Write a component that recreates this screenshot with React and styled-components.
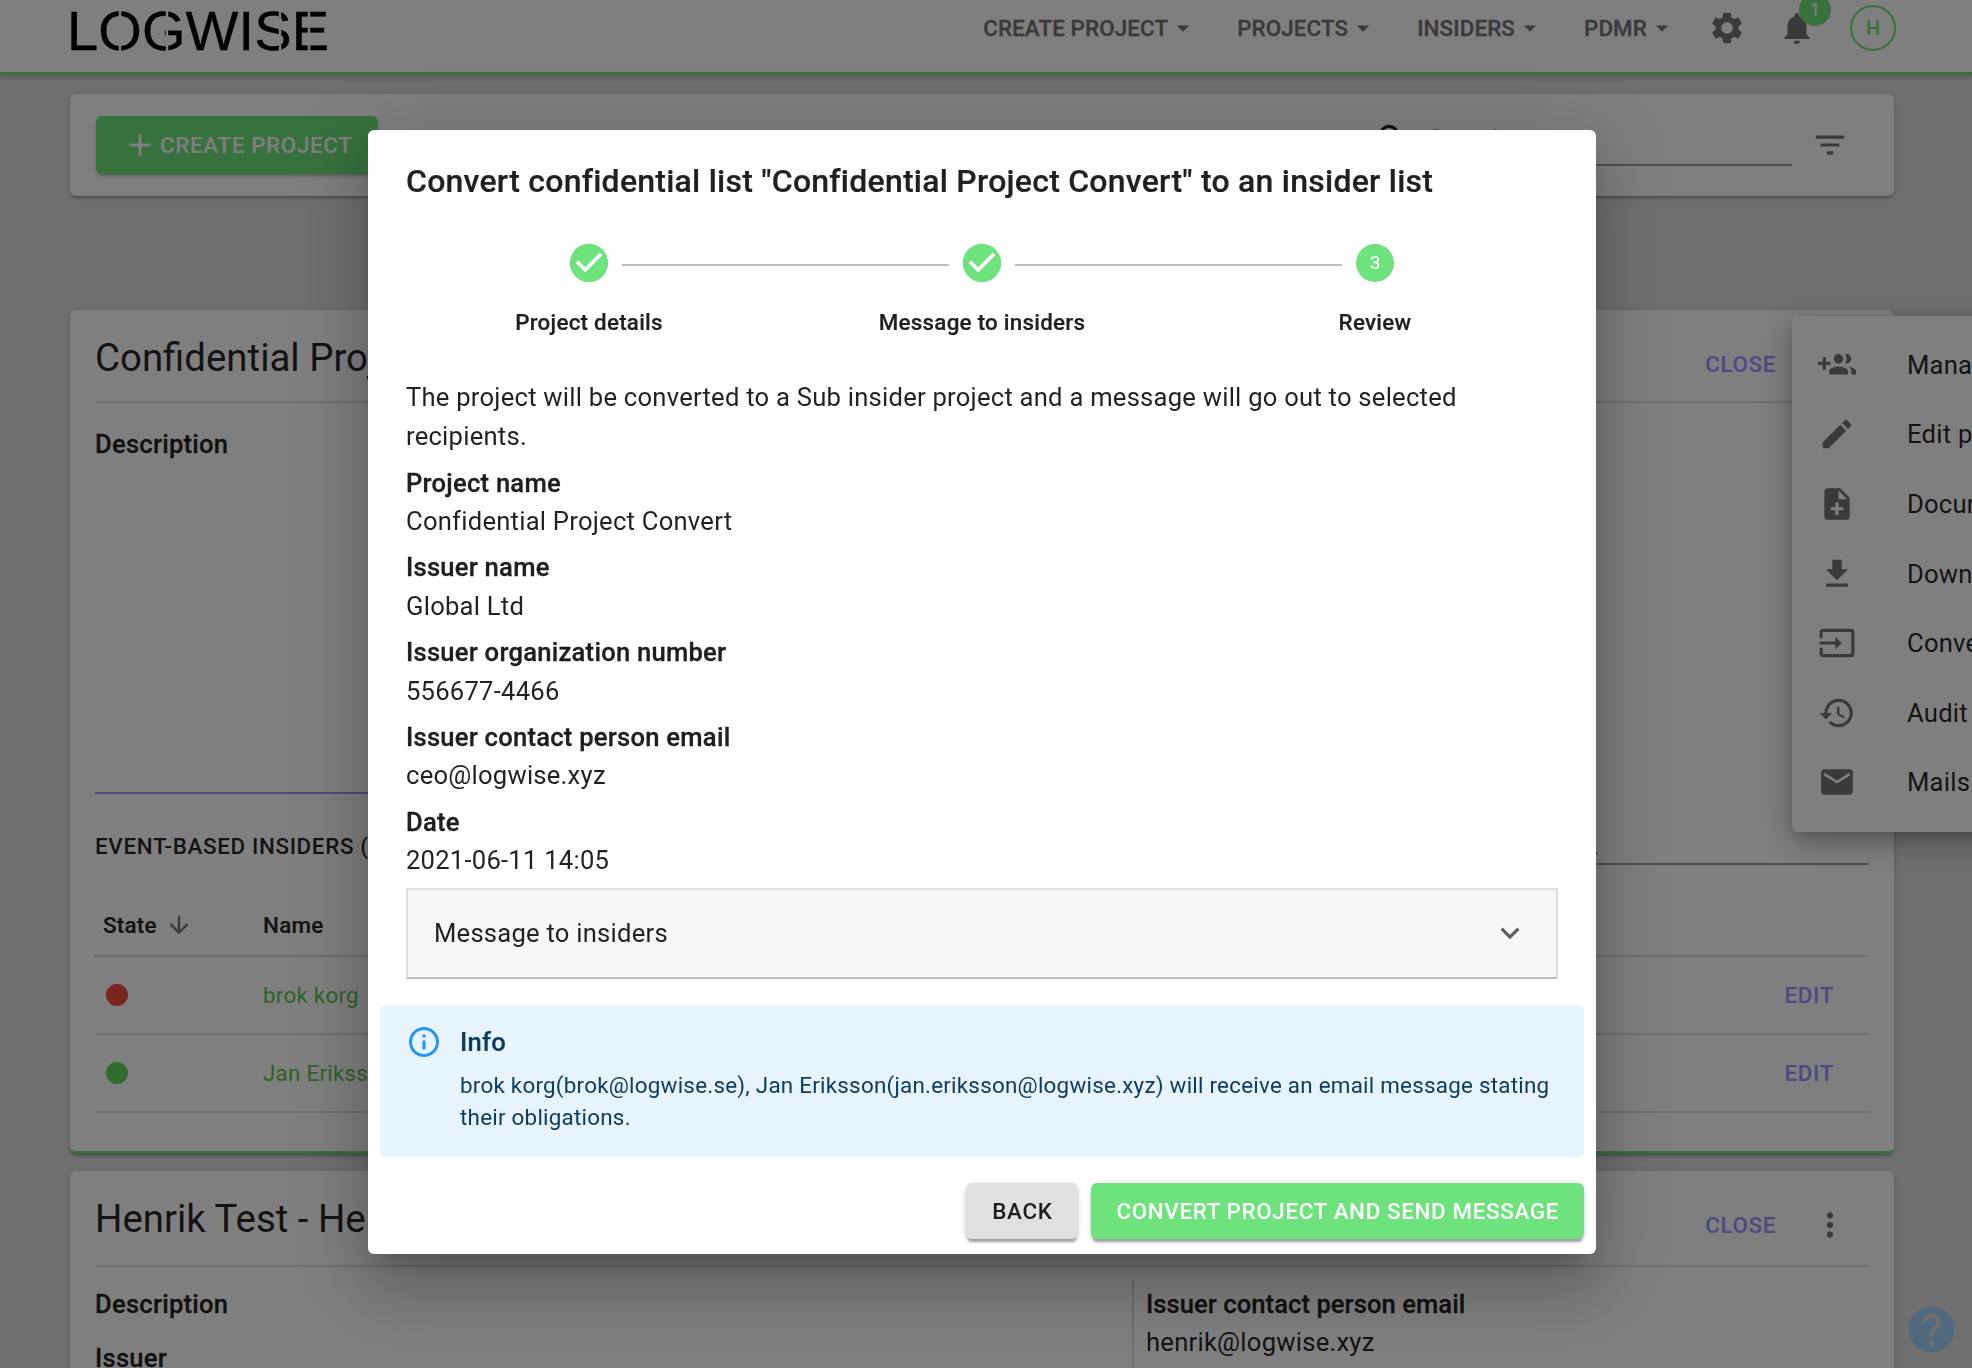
import React from "react";
import styled, { createGlobalStyle } from "styled-components";
import {
  MdSettings, MdNotifications, MdArrowDropDown, MdAdd, MdSearch, MdFilterList, MdMoreVert,
  MdEdit, MdNoteAdd, MdGetApp, MdInput, MdHistory, MdMail, MdHelp, MdArrowDownward,
  MdExpandMore, MdCheckCircle, MdOutlineInfo,
} from "react-icons/md";

const Global = createGlobalStyle`
  html, body { margin: 0; height: 100%; overflow: hidden; background: #e0e0e0; }
  body { font-family: Roboto, "Liberation Sans", sans-serif; color: rgba(0,0,0,.87); }
  * { box-sizing: border-box; }
  #root { height: 100%; }
`;

const Header = styled.header`
  display: flex; align-items: center; height: 75px; padding: 0 76px 17px 67px;
  background: #fff; border-bottom: 3px solid #6ee27c; box-shadow: 0 3px 5px rgba(0,0,0,.2);
`;
const LogoMark = styled.svg`width: 264px; height: 56px; margin-top: 8px; flex: none; display: block;`;
const Nav = styled.nav`display: flex; align-items: center; gap: 39px; margin-left: auto;`;
const NavItem = styled.div`
  display: flex; align-items: center; font-size: 22.4px; font-weight: 500; letter-spacing: .1px;
  -webkit-text-stroke: .3px #757575;
  color: #757575; white-space: nowrap; svg { font-size: 30px; }
`;
const HeaderIcon = styled.div`
  position: relative; display: flex; margin-left: ${p => p.$gap}px; color: #757575; font-size: 38px;
`;
const Badge = styled.span`
  position: absolute; left: 21px; top: -15px; width: 32px; height: 32px; border-radius: 50%;
  background: #6ee27c; color: #fff; font-size: 19px; display: flex; align-items: center; justify-content: center;
`;
const Avatar = styled.div`
  width: 46px; height: 46px; margin-left: 34px; border-radius: 50%; border: 2px solid #6ee27c; color: #6ee27c;
  font-size: 20px; font-weight: 500; display: flex; align-items: center; justify-content: center;
`;

const Main = styled.main`padding: 19px 78px 0 70px;`;
const Card = styled.section`
  background: #fff; border-radius: 6px; padding: 0 25px;
  margin-top: ${p => p.$top || 0}px;
  border-bottom: ${p => (p.$accent ? "3px solid #6ee27c" : "0")};
  box-shadow: 0 3px 2px -2px rgba(0,0,0,.2), 0 2px 3px rgba(0,0,0,.14), 0 2px 8px rgba(0,0,0,.12);
`;
const Toolbar = styled(Card)`display: flex; align-items: flex-start; height: 102px; padding: 22px 26px;`;
const CreateButton = styled.button`
  display: flex; align-items: center; height: 58px; width: 282px; padding: 0 0 0 26px; border: 0; border-radius: 6px;
  background: #6ee27c; color: #fff; font: 500 22.4px Roboto, sans-serif; letter-spacing: .02857em;
  box-shadow: 0 3px 3px -2px rgba(0,0,0,.2), 0 3px 4px rgba(0,0,0,.14);
  svg { font-size: 36px; margin-right: 2px; }
`;
const SearchField = styled.div`
  display: flex; align-items: center; height: 50px; width: 422px; margin-left: auto; padding: 0 0 2px 4px;
  border-bottom: 2px solid #9e9e9e; color: #9e9e9e; font-size: 25.6px; gap: 16px;
  svg { color: #222; font-size: 38px; flex: none; }
`;
const ToolIcon = styled.div`display: flex; margin: 10px 19px 0 19px; color: #757575; font-size: 38px;`;

const CardHead = styled.div`
  display: flex; align-items: center; height: ${p => p.$h}px; padding: 0 93px 0 0; border-bottom: 2px solid #dcdcdc; position: relative;
`;
const CardTitle = styled.h2`margin: ${p => p.$drop}px 0 0; flex: 1; font-size: 38.4px; font-weight: 400; white-space: nowrap;`;
const TextLink = styled.span`
  color: #9696ff; font-size: 22.4px; font-weight: 500; letter-spacing: .02857em;
`;
const HeadClose = styled(TextLink)`align-self: flex-start; margin-top: 41px; line-height: 26px;`;
const More = styled.div`position: absolute; right: 20px; top: 35px; display: flex; color: #757575; font-size: 38px;`;
const Label = styled.div`
  font-size: 25.6px; font-weight: 500; line-height: 38.4px; letter-spacing: .00938em; -webkit-text-stroke: .3px currentColor;
`;
const Value = styled.div`font-size: 25.6px; line-height: 38.4px; letter-spacing: .00938em;`;
const DescBlock = styled.div`height: 391px; padding-top: 22px; display: flex; flex-direction: column; justify-content: space-between;`;
const PurpleRule = styled.div`width: 1037px; height: 2px; background: #9696ff;`;
const InsidersBar = styled.div`display: flex; height: 71px;`;
const SectionTitle = styled.div`
  padding-top: 36px; font-size: 22.4px; line-height: 32px; font-weight: 500; letter-spacing: .02857em; white-space: nowrap;
`;
const InsiderSearch = styled.div`
  margin-left: auto; width: 468px; height: 71px; padding: 37px 0 0 100px; font-size: 25.6px; line-height: 30px;
  color: #8a8a8a; border-bottom: 2px solid #9e9e9e;
`;
const Row = styled.div`
  display: grid; grid-template-columns: 160px 1fr auto; align-items: center; height: ${p => p.$h}px; margin-top: ${p => p.$top || 0}px;
  padding: 0 35px 0 8px; border-bottom: 2px solid #dcdcdc; font-size: 22.4px; letter-spacing: .01071em;
`;
const HeadCell = styled.div`display: flex; align-items: center; gap: 8px; font-weight: 500; -webkit-text-stroke: .2px currentColor; svg { color: #757575; font-size: 28px; }`;
const StateDot = styled.span`display: block; width: 22px; height: 22px; margin-left: 3px; border-radius: 50%; background: ${p => p.$c};`;
const NameLink = styled.span`color: #5cc44a;`;
const RowEnd = styled.div`height: 38px;`;
const Columns = styled.div`display: grid; grid-template-columns: 1037px 1fr; padding-top: 13px; height: 200px;`;
const LeftCol = styled.div`padding-top: 5px;`;
const RightCol = styled.div`border-left: 2px solid #dcdcdc; padding: 5px 0 0 12px;`;
const SpacedLabel = styled(Label)`margin-top: ${p => p.$top || 0}px;`;
const NarrowLabel = styled(Label)`letter-spacing: .05px;`;

const Menu = styled.div`
  position: absolute; left: 1792px; top: 316px; width: 300px; height: 516px; padding: 14px 0; background: #fff; border-radius: 6px;
  box-shadow: 0 8px 16px -5px rgba(0,0,0,.2), 0 13px 30px 2px rgba(0,0,0,.14), 0 5px 36px 4px rgba(0,0,0,.12);
`;
const MenuItem = styled.div`
  display: flex; align-items: center; height: 69.6px; padding-left: 25px; font-size: 25.6px; letter-spacing: .00938em; white-space: nowrap;
  svg { width: 40px; font-size: 38px; color: #757575; margin-right: 50px; flex: none; }
`;
const Help = styled.div`position: fixed; right: 13px; bottom: 11px; display: flex; font-size: 55px; color: #a2d3ff;`;

const Backdrop = styled.div`position: fixed; inset: 0; background: rgba(0,0,0,.5);`;
const Modal = styled.div`
  position: fixed; left: 368px; top: 130px; width: 1228px; height: 1124px; background: #fff; border-radius: 6px;
  box-shadow: 0 17px 24px -11px rgba(0,0,0,.2), 0 38px 60px 5px rgba(0,0,0,.14), 0 14px 73px 13px rgba(0,0,0,.12);
  display: flex; flex-direction: column;
`;
const ModalTitle = styled.h2`
  margin: 0; padding: 26px 38px 0; font-size: 32px; line-height: 51.2px; font-weight: 500; letter-spacing: .0075em; white-space: nowrap;
  -webkit-text-stroke: .2px currentColor;
`;
const ModalBody = styled.div`padding: 36.5px 38px 0;`;
const StepIcons = styled.div`display: flex; align-items: center; gap: 14px; padding: 0 164px; height: 38px;`;
const StepCircle = styled.div`
  flex: none; width: 38px; height: 38px; border-radius: 50%; background: #6ee27c; color: #fff;
  font-size: 19px; display: flex; align-items: center; justify-content: center;
`;
const StepCheck = styled.div`
  flex: none; display: flex; width: 38px; height: 38px; align-items: center; justify-content: center; color: #6ee27c;
  svg { font-size: 46px; flex: none; }
`;
const Connector = styled.div`flex: 1; height: 2px; margin-top: 4px; background: #bdbdbd;`;
const StepLabels = styled.div`display: grid; grid-template-columns: 366px 420px 366px; margin-top: 24px;`;
const StepLabel = styled.div`
  text-align: center; font-size: 22.4px; line-height: 32px; font-weight: 500; letter-spacing: .01071em; -webkit-text-stroke: .2px currentColor;
`;
const Intro = styled.p`margin: 40.5px 0 8.5px; font-size: 25.6px; line-height: 38.4px; letter-spacing: .00938em;`;
const Field = styled.div`margin-bottom: 8px;`;
const Accordion = styled.div`
  display: flex; align-items: center; justify-content: space-between; height: 91px; padding: 0 27px 0 26px;
  background: #f7f7f7; border: 2px solid #e0e0e0; border-bottom-color: #bdbdbd; font-size: 25.6px; letter-spacing: .00938em;
  svg { color: #616161; font-size: 38px; }
`;
const Info = styled.div`
  display: flex; height: 152px; margin: 26px 12px 0; padding: 18.5px 25px 0 29px; border-radius: 6px; background: #e8f4fd; color: #0d3c61;
`;
const InfoIcon = styled.div`display: flex; color: #2196f3; font-size: 36px; width: 54px; height: 38px; align-items: center; margin-left: -3px; flex: none;`;
const InfoHead = styled.div`
  font-size: 25.6px; line-height: 38.4px; font-weight: 500; letter-spacing: .00938em; margin-bottom: 8px; -webkit-text-stroke: .2px currentColor;
`;
const InfoText = styled.div`font-size: 22.4px; line-height: 32px; letter-spacing: .01071em;`;
const Actions = styled.div`display: flex; justify-content: flex-end; gap: 13px; margin-top: 26px; padding: 0 12px;`;
const ActionButton = styled.button`
  height: 56px; padding: 0 ${p => (p.$primary ? 25 : 26)}px; border: 0; border-radius: 6px; background: ${p => (p.$primary ? "#6ee27c" : "#e0e0e0")};
  color: ${p => (p.$primary ? "#fff" : "rgba(0,0,0,.87)")}; font: 500 22.4px Roboto, sans-serif; letter-spacing: .02857em; white-space: nowrap;
  box-shadow: 0 5px 2px -2px rgba(0,0,0,.2), 0 3px 3px rgba(0,0,0,.14), 0 2px 6px rgba(0,0,0,.12);
`;

const GroupAddIcon = () => (
  <svg viewBox="0 0 24 24" width="1em" height="1em" fill="currentColor">
    <path d="M8 10H5V7H3v3H0v2h3v3h2v-3h3v-2zm10 1c1.66 0 2.99-1.34 2.99-3S19.66 5 18 5c-.32 0-.63.05-.91.14.57.81.9 1.79.9 2.86s-.34 2.04-.9 2.86c.28.09.59.14.91.14zm-5 0c1.66 0 2.99-1.34 2.99-3S14.66 5 13 5s-3 1.34-3 3 1.34 3 3 3zm6.62 2.16c.83.73 1.38 1.66 1.38 2.84v2h3v-2c0-1.54-2.37-2.49-4.38-2.84zM13 13c-2 0-6 1-6 3v2h12v-2c0-2-4-3-6-3z" />
  </svg>
);

const LOGO_CUTS = [53, 100, 213, 242];
const Logo = () => (
  <LogoMark viewBox="0 0 264 56">
    <text x="0" y="46" fontFamily="'Liberation Sans', sans-serif" fontSize="56" textLength="262" fill="#000" stroke="#000" strokeWidth=".4">LOGWISE</text>
    {LOGO_CUTS.map(x => <line key={x} x1={x} x2={x} y1="0" y2="56" stroke="#fff" strokeWidth="2.5" />)}
  </LogoMark>
);

const NAV = ["CREATE PROJECT", "PROJECTS", "INSIDERS", "PDMR"];
const MENU = [
  [GroupAddIcon, "Manage insiders"], [MdEdit, "Edit project"], [MdNoteAdd, "Documents"], [MdGetApp, "Download"],
  [MdInput, "Convert"], [MdHistory, "Audit log"], [MdMail, "Mails"],
];
const FIELDS = [
  ["Project name", "Confidential Project Convert"], ["Issuer name", "Global Ltd"], ["Issuer organization number", "556677-4466"],
  ["Issuer contact person email", "ceo@logwise.xyz"], ["Date", "2021-06-11 14:05"],
];
const INSIDERS = [["brok korg", "#f44a40"], ["Jan Eriksson", "#66d45e"]];

export default function App() {
  return (
    <>
      <Global />
      <Header>
        <Logo />
        <Nav>{NAV.map(n => <NavItem key={n}>{n}<MdArrowDropDown /></NavItem>)}</Nav>
        <HeaderIcon $gap={31}><MdSettings /></HeaderIcon>
        <HeaderIcon $gap={32}><MdNotifications /><Badge>1</Badge></HeaderIcon>
        <Avatar>H</Avatar>
      </Header>
      <Main>
        <Toolbar as="section">
          <CreateButton><MdAdd />CREATE PROJECT</CreateButton>
          <SearchField><MdSearch />Search</SearchField>
          <ToolIcon><MdFilterList /></ToolIcon>
        </Toolbar>
        <Card $top={114} $accent>
          <CardHead $h={93}>
            <CardTitle $drop={3}>Confidential Project Convert</CardTitle>
            <HeadClose>CLOSE</HeadClose>
          </CardHead>
          <DescBlock><Label>Description</Label><PurpleRule /></DescBlock>
          <InsidersBar>
            <SectionTitle>EVENT-BASED INSIDERS (2)</SectionTitle>
            <InsiderSearch>Search...</InsiderSearch>
          </InsidersBar>
          <Row $h={62} $top={30}><HeadCell>State <MdArrowDownward /></HeadCell><HeadCell>Name</HeadCell></Row>
          {INSIDERS.map(([name, c]) => (
            <Row key={name} $h={78}><StateDot $c={c} /><NameLink>{name}</NameLink><TextLink>EDIT</TextLink></Row>
          ))}
          <RowEnd />
        </Card>
        <Card $top={17}>
          <CardHead $h={96}>
            <CardTitle $drop={0}>Henrik Test - Henrik</CardTitle>
            <HeadClose>CLOSE</HeadClose>
            <More><MdMoreVert /></More>
          </CardHead>
          <Columns>
            <LeftCol><Label>Description</Label><SpacedLabel $top={16}>Issuer</SpacedLabel></LeftCol>
            <RightCol><NarrowLabel>Issuer contact person email</NarrowLabel><Value>henrik@logwise.xyz</Value></RightCol>
          </Columns>
        </Card>
      </Main>
      <Menu>{MENU.map(([Icon, t]) => <MenuItem key={t}><Icon />{t}</MenuItem>)}</Menu>
      <Help><MdHelp /></Help>
      <Backdrop />
      <Modal>
        <ModalTitle>Convert confidential list "Confidential Project Convert" to an insider list</ModalTitle>
        <ModalBody>
          <StepIcons>
            <StepCheck><MdCheckCircle /></StepCheck><Connector />
            <StepCheck><MdCheckCircle /></StepCheck><Connector />
            <StepCircle>3</StepCircle>
          </StepIcons>
          <StepLabels>
            <StepLabel>Project details</StepLabel><StepLabel>Message to insiders</StepLabel><StepLabel>Review</StepLabel>
          </StepLabels>
          <Intro>The project will be converted to a Sub insider project and a message will go out to selected recipients.</Intro>
          {FIELDS.map(([l, v]) => <Field key={l}><Label>{l}</Label><Value>{v}</Value></Field>)}
          <Accordion>Message to insiders<MdExpandMore /></Accordion>
        </ModalBody>
        <Info>
          <InfoIcon><MdOutlineInfo /></InfoIcon>
          <div>
            <InfoHead>Info</InfoHead>
            <InfoText>brok korg(brok@logwise.se), Jan Eriksson(jan.eriksson@logwise.xyz) will receive an email message stating their obligations.</InfoText>
          </div>
        </Info>
        <Actions>
          <ActionButton>BACK</ActionButton>
          <ActionButton $primary>CONVERT PROJECT AND SEND MESSAGE</ActionButton>
        </Actions>
      </Modal>
    </>
  );
}
